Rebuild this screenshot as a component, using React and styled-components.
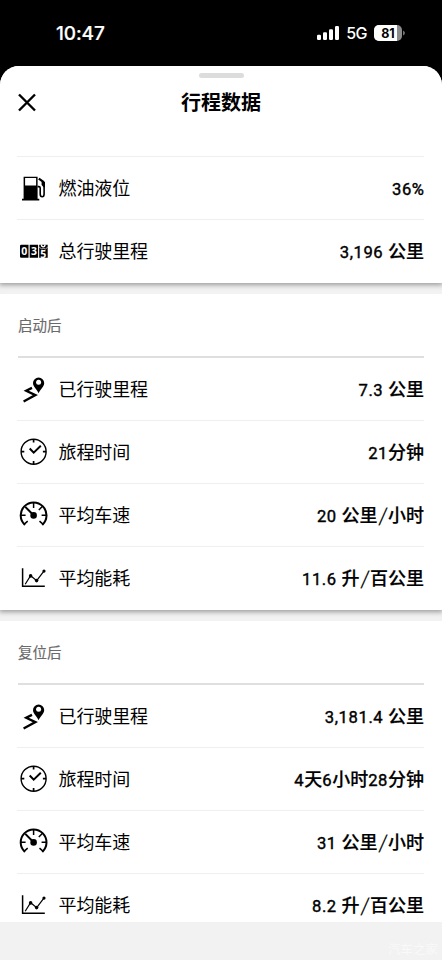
import React from 'react';
import styled, { createGlobalStyle } from 'styled-components';

const GlobalStyle = createGlobalStyle`
  * { box-sizing: border-box; }
  body {
    margin: 0;
    background: #000;
    font-family: 'Noto Sans CJK SC', sans-serif;
    color: #000;
  }
`;

const Screen = styled.div`
  width: 442px;
  height: 960px;
  overflow: hidden;
  display: flex;
  flex-direction: column;
  position: relative;
`;

const StatusBar = styled.header`
  height: 66px;
  flex: none;
  display: flex;
  align-items: center;
  justify-content: space-between;
  padding: 0 37px 0 56px;
  color: #fff;
  font-family: Inter, sans-serif;
`;

const Clock = styled.span`
  font-size: 19px;
  font-weight: 500;
  letter-spacing: -0.1px;
  -webkit-text-stroke: 0.2px #fff;
`;

const StatusIcons = styled.div`
  display: flex;
  align-items: center;
`;

const Network = styled.span`
  font-size: 16px;
  font-weight: 500;
  margin: 0 7px 0 7px;
  letter-spacing: -0.5px;
`;

const Sheet = styled.main`
  flex: 1;
  display: flex;
  flex-direction: column;
  background: #f2f2f2;
  border-radius: 19px 19px 0 0;
  overflow: hidden;
`;

const SheetHeader = styled.div`
  height: 90px;
  flex: none;
  background: #fff;
  padding-top: 7px;
  display: flex;
  flex-direction: column;
  align-items: center;
`;

const Handle = styled.div`
  width: 45px;
  height: 5px;
  border-radius: 3px;
  background: #dcdcdc;
`;

const TitleRow = styled.div`
  width: 100%;
  height: 46px;
  display: grid;
  grid-template-columns: 40px 1fr 40px;
  align-items: center;
  padding: 2px 17px 0;
`;

const Title = styled.h1`
  margin: 0;
  font-size: 20px;
  line-height: 30px;
  font-weight: 700;
  text-align: center;
`;

const CloseButton = styled.button`
  width: 20px;
  height: 20px;
  padding: 0;
  border: 0;
  background: none;
  display: block;
`;

const Card = styled.section`
  height: ${(p) => p.$height}px;
  flex: none;
  margin-bottom: 11px;
  padding: 0 18px;
  background: #fff;
  overflow: hidden;
  box-shadow: ${(p) => (p.$clipped ? 'none' : '0 1px 5px 1px rgba(0, 0, 0, 0.36)')};
  clip-path: inset(0 0 -11px 0);
`;

const CardTitle = styled.h2`
  margin: 0;
  height: 62px;
  font-size: 14.5px;
  line-height: 61px;
  font-weight: 400;
  color: #6a6a6a;
  -webkit-text-stroke: 0.15px #6a6a6a;
`;

const Row = styled.div`
  height: ${(p) => (p.$lead ? 64 : 63)}px;
  display: flex;
  align-items: center;
  margin-left: ${(p) => (p.$lead ? 0 : '-1px')};
  padding: ${(p) => (p.$lead ? '0' : '0 0 0 1px')};
  border-top: ${(p) => (p.$lead ? '2px solid #dfdfdf' : '1px solid #efefef')};
`;

const IconSlot = styled.span`
  width: 30px;
  height: 30px;
  flex: none;
  margin: 0 11px 0 1px;
`;

const Label = styled.span`
  flex: 1;
  font-size: 18px;
  line-height: 27px;
  margin: -1px 0 0 -1.5px;
  letter-spacing: -0.1px;
`;

const Value = styled.span`
  font-size: 18px;
  line-height: 27px;
  font-weight: 500;
  white-space: pre;
  -webkit-text-stroke: 0.2px #000;
`;

const Digits = styled.span`
  font-family: Roboto, sans-serif;
  font-weight: 400;
  font-size: 16.6px;
  letter-spacing: 0.6px;
  margin-right: ${(p) => (p.$last ? '-0.6px' : 0)};
  -webkit-text-stroke: 0.4px #000;
`;

const Slash = styled.span`
  display: inline-block;
  width: 10.5px;
  text-align: center;
  font-weight: 400;
  transform: skewX(-8deg);
`;

const Watermark = styled.span`
  position: absolute;
  right: 4px;
  bottom: 1px;
  font-size: 12.5px;
  line-height: 20px;
  color: #f9f9f9;
`;

const Svg = ({ children, size = 30, ...rest }) => (
  <svg width={size} height={size} viewBox={`0 0 ${size} ${size}`} fill="none" stroke="#000" display="block" {...rest}>
    {children}
  </svg>
);

const FuelIcon = () => (
  <Svg>
    <path d="M4.6 3.7h14v22h1.7v1.7H3v-1.7h1.6z" fill="#000" stroke="none" />
    <path d="M6.1 5.1h11v7.3h-11z" fill="#fff" stroke="none" />
    <path d="M18.6 13.6h1.3q1.3 0 1.3 1.4v6q0 2.7 2 2.7 1.9 0 1.9-2.7V9.5" strokeWidth="1.6" />
    <path d="M19.8 5.6l5 3.6" strokeWidth="2.2" />
    <path d="M22.6 7.5l3.4 1.4v5.6h-1.1l-2.3-2.6z" fill="#000" stroke="none" />
  </Svg>
);

const OdometerDigit = styled.text`
  font: 700 10.5px 'Open Sans', sans-serif;
  fill: #fff;
  stroke: none;
  text-anchor: middle;
`;

const OdometerIcon = () => (
  <Svg>
    <path d="M2.2 8.8h7.3v13H2.2q-1.2 0-1.2-1.3V10.1q0-1.3 1.2-1.3zM10.7 8.8h8.4v13h-8.4zM20.2 8.8h8.5v13h-8.5z" fill="#000" stroke="none" />
    <OdometerDigit x="5.3" y="19">0</OdometerDigit>
    <OdometerDigit x="14.9" y="19">3</OdometerDigit>
    <OdometerDigit x="24.2" y="21.6">5</OdometerDigit>
    <path d="M22.4 8.6q0 2.3 1.8 2.3t1.8-2.3" stroke="#fff" strokeWidth="1.4" />
    <path d="M20.2 11.2l2.6 1.8 1.7-.6 1.9.6 2.3-1.8" stroke="#fff" strokeWidth=".7" />
  </Svg>
);

const RouteIcon = () => (
  <Svg>
    <path d="M19.6 19.3c-1.2-3.3-5.6-6.4-5.6-10.2a5.6 5.6 0 0 1 11.2 0c0 3.8-4.4 6.9-5.6 10.2z" fill="#000" stroke="none" />
    <circle cx="19.6" cy="8.3" r="2.5" fill="#fff" stroke="none" />
    <path d="M13 13.9L7.2 16.8l9.2 4.3-11.8 6.3" strokeWidth="2.3" />
  </Svg>
);

const ClockIcon = () => (
  <Svg>
    <circle cx="14.6" cy="14.7" r="12.5" strokeWidth="1.4" />
    <path d="M14.6 2.2v3.3M14.6 23.9v3.3M2.1 14.7h3.2M23.9 14.7h3.2" strokeWidth="1.7" />
    <path d="M10.7 11.5l4 4.1 7.1-6.9" strokeWidth="2" />
  </Svg>
);

const GaugeIcon = () => (
  <Svg>
    <path d="M5.9 24.9A12.9 12.9 0 1 1 23.3 24.9" strokeWidth="2" />
    <path d="M5 24.4l3.7-3.3M24.2 24.4l-3.7-3.3M2 15.2h4.6M22.6 15.2h4.6M14.6 2.5v5.6M23.6 6.2l-3.8 3.8" strokeWidth="1.5" />
    <path d="M6.3 6.9l8.3 8.3" strokeWidth="2" />
    <circle cx="14.6" cy="15.4" r="3.3" fill="#000" stroke="none" />
  </Svg>
);

const ChartIcon = () => (
  <Svg>
    <path d="M3.6 5.3v17.9h22.2" strokeWidth="1.5" />
    <path d="M6.2 21.2l5.4-8.5 6.1 5 7.2-9.5" strokeWidth="1.2" />
    <g fill="#000" stroke="none">
      <circle cx="11.6" cy="12.9" r="1.8" />
      <circle cx="17.6" cy="17.6" r="1.8" />
      <circle cx="25" cy="8.1" r="1.6" />
    </g>
  </Svg>
);

const SignalIcon = () => (
  <svg width="22" height="14" viewBox="0 0 22 14" fill="#fff">
    <rect x="0" y="8.8" width="4" height="5.2" rx="1.2" />
    <rect x="6" y="6.2" width="4" height="7.8" rx="1.2" />
    <rect x="12" y="3.2" width="4" height="10.8" rx="1.2" />
    <rect x="18" y="0" width="4" height="14" rx="1.2" />
  </svg>
);

const BatteryText = styled.text`
  font: 700 12.5px Inter, sans-serif;
  text-anchor: middle;
  fill: #000;
`;

const BatteryIcon = () => (
  <svg width="31" height="16" viewBox="0 0 31 16">
    <defs>
      <clipPath id="charge"><path d="M0 0h23v16H0z" /></clipPath>
    </defs>
    <rect width="28" height="16" rx="5" fill="#8c8c8c" />
    <rect width="28" height="16" rx="5" fill="#fff" clipPath="url(#charge)" />
    <path d="M29.2 5.4q1.6 1 1.6 2.6t-1.6 2.6z" fill="#8c8c8c" />
    <BatteryText x="14" y="12.6">81</BatteryText>
  </svg>
);

const cards = [
  {
    height: 127,
    rows: [
      [FuelIcon, '燃油液位', '36%'],
      [OdometerIcon, '总行驶里程', '3,196 公里'],
    ],
  },
  {
    title: '启动后',
    height: 316,
    rows: [
      [RouteIcon, '已行驶里程', '7.3 公里'],
      [ClockIcon, '旅程时间', '21分钟'],
      [GaugeIcon, '平均车速', '20 公里/小时'],
      [ChartIcon, '平均能耗', '11.6 升/百公里'],
    ],
  },
  {
    title: '复位后',
    height: 301,
    clipped: true,
    rows: [
      [RouteIcon, '已行驶里程', '3,181.4 公里'],
      [ClockIcon, '旅程时间', '4天6小时28分钟'],
      [GaugeIcon, '平均车速', '31 公里/小时'],
      [ChartIcon, '平均能耗', '8.2 升/百公里'],
    ],
  },
];

const Reading = ({ text }) => (
  <Value>
    {text.split(/([\d.,% ]+|\/)/).filter(Boolean).map((part, i) => {
      if (part === '/') return <Slash key={i}>/</Slash>;
      return /\d/.test(part) ? <Digits key={i} $last={part === text}>{part}</Digits> : part;
    })}
  </Value>
);

export default function App() {
  return (
    <>
      <GlobalStyle />
      <Screen>
        <StatusBar>
          <Clock>10:47</Clock>
          <StatusIcons>
            <SignalIcon />
            <Network>5G</Network>
            <BatteryIcon />
          </StatusIcons>
        </StatusBar>
        <Sheet>
          <SheetHeader>
            <Handle />
            <TitleRow>
              <CloseButton aria-label="关闭">
                <Svg size={20}><path d="M2 2.5l16 16M18 2.5L2 18.5" strokeWidth="2.4" /></Svg>
              </CloseButton>
              <Title>行程数据</Title>
            </TitleRow>
          </SheetHeader>
          {cards.map(({ title, height, clipped, rows }, c) => (
            <Card key={c} $height={height} $clipped={clipped}>
              {title && <CardTitle>{title}</CardTitle>}
              {rows.map(([Icon, label, value], r) => (
                <Row key={label} $lead={Boolean(title) && r === 0}>
                  <IconSlot><Icon /></IconSlot>
                  <Label>{label}</Label>
                  <Reading text={value} />
                </Row>
              ))}
            </Card>
          ))}
        </Sheet>
        <Watermark>汽车之家</Watermark>
      </Screen>
    </>
  );
}
